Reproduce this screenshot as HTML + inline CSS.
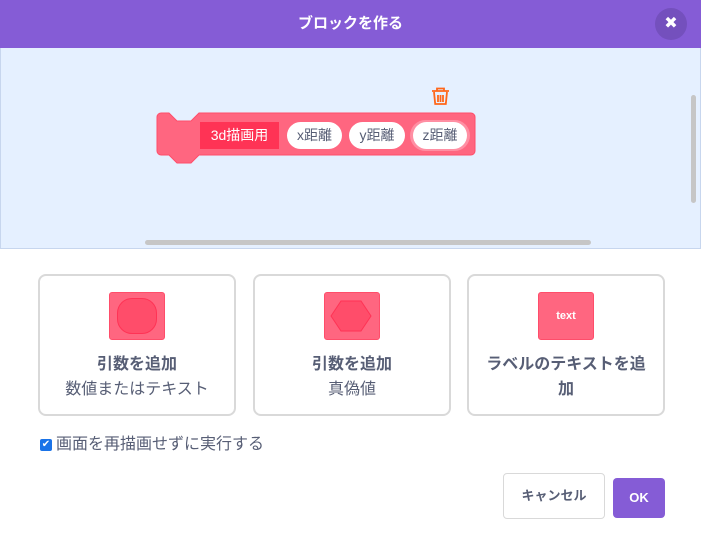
<!DOCTYPE html>
<html><head><meta charset="utf-8"><style>
*{box-sizing:border-box;margin:0;padding:0}
body{width:701px;height:541px;overflow:hidden;background:#fff;font-family:"Liberation Sans","Noto Sans CJK JP",sans-serif;position:relative;color:#575e75}
.hdr{position:absolute;left:0;top:0;width:701px;height:48px;background:#855cd6;color:#fff;font-size:15px;font-weight:bold;text-align:center;line-height:48px}
.close{position:absolute;left:655px;top:8px;width:32px;height:32px;border-radius:50%;background:#7450bd;color:#fff;text-align:center;line-height:32px;font-size:16px}
.ws{position:absolute;left:0;top:48px;width:701px;height:201px;background:#e5f0ff;border-bottom:1px solid #c7d6ee;border-left:1px solid #c7d6ee;border-right:1px solid #c7d6ee}
.vs{position:absolute;left:691px;top:95px;width:5px;height:108px;background:#c6c6c6;border-radius:3px}
.hs{position:absolute;left:145px;top:240px;width:446px;height:5px;background:#c6c6c6;border-radius:3px}
.lbl{position:absolute;left:200px;top:122px;width:79px;height:27px;background:#ff3355;color:#fff;font-size:14px;line-height:27px;text-align:center}
.pill{position:absolute;top:122px;height:27px;background:#fff;border-radius:14px;font-size:14px;line-height:27px;text-align:center;color:#575e75}
.card{position:absolute;top:274px;width:198px;height:142px;border:2px solid #d9d9d9;border-radius:8px;text-align:center}
.ic{position:absolute;left:69px;top:16px;width:56px;height:48px;background:#ff6680;border:1px solid #ff4d6a;border-radius:3px}
.t1{position:absolute;left:0;right:0;top:76px;font-size:16px;font-weight:bold;line-height:25px}
.t2{position:absolute;left:0;right:0;top:101px;font-size:16px;line-height:25px}
</style></head><body>
<div class="hdr">ブロックを作る</div>
<div class="close">✖</div>
<div class="ws"></div>
<div class="vs"></div><div class="hs"></div>
<svg style="position:absolute;left:0;top:0" width="701" height="250">
<path d="M157,117 a4,4 0 0 1 4,-4 h8 l8,8 h14 l8,-8 h272 a4,4 0 0 1 4,4 v34 a4,4 0 0 1 -4,4 h-272 l-8,8 h-14 l-8,-8 h-8 a4,4 0 0 1 -4,-4 z" fill="#ff6680" stroke="#ff4d6a" stroke-width="1"/>
<rect x="410" y="120" width="60" height="31" rx="15.5" fill="#ff8fa3"/>
<g fill="none" stroke="#ff661a" stroke-width="1.8"><path d="M432,91 h17 M437,91 v-2.5 h7 v2.5 M434,92 l1.2,12 h10.6 l1.2,-12 M438,95 v7 M440.5,95 v7 M443,95 v7"/></g>
</svg>
<div class="lbl">3d描画用</div>
<div class="pill" style="left:287px;width:55px">x距離</div>
<div class="pill" style="left:349px;width:56px">y距離</div>
<div class="pill" style="left:413px;width:54px">z距離</div>
<div class="card" style="left:38px"><div class="ic"><div style="position:absolute;left:7px;top:5px;width:40px;height:36px;border-radius:15px;background:#ff4d6a;border:1px solid #ff3355"></div></div><div class="t1">引数を追加</div><div class="t2">数値またはテキスト</div></div>
<div class="card" style="left:253px"><div class="ic"><svg width="56" height="48" style="position:absolute;left:-1px;top:-1px"><path d="M7,24 l10,-15 h20 l10,15 l-10,15 h-20 z" fill="#ff4d6a" stroke="#ff3355"/></svg></div><div class="t1">引数を追加</div><div class="t2">真偽値</div></div>
<div class="card" style="left:467px"><div class="ic" style="color:#fff;font-size:11px;font-weight:bold;line-height:46px">text</div><div class="t1">ラベルのテキストを追<br>加</div></div>
<div style="position:absolute;left:40px;top:439px;width:12px;height:12px;background:#1a73e8;border-radius:2px;color:#fff;font-size:10px;line-height:12px;text-align:center">✔</div>
<div style="position:absolute;left:56px;top:435px;font-size:16px;line-height:20px">画面を再描画せずに実行する</div>
<div style="position:absolute;left:503px;top:473px;width:102px;height:46px;border:1px solid #d9d9d9;border-radius:4px;font-size:13px;font-weight:bold;text-align:center;line-height:44px">キャンセル</div>
<div style="position:absolute;left:613px;top:478px;width:52px;height:40px;background:#855cd6;border-radius:4px;color:#fff;font-size:13px;font-weight:bold;text-align:center;line-height:40px">OK</div>
</body></html>
